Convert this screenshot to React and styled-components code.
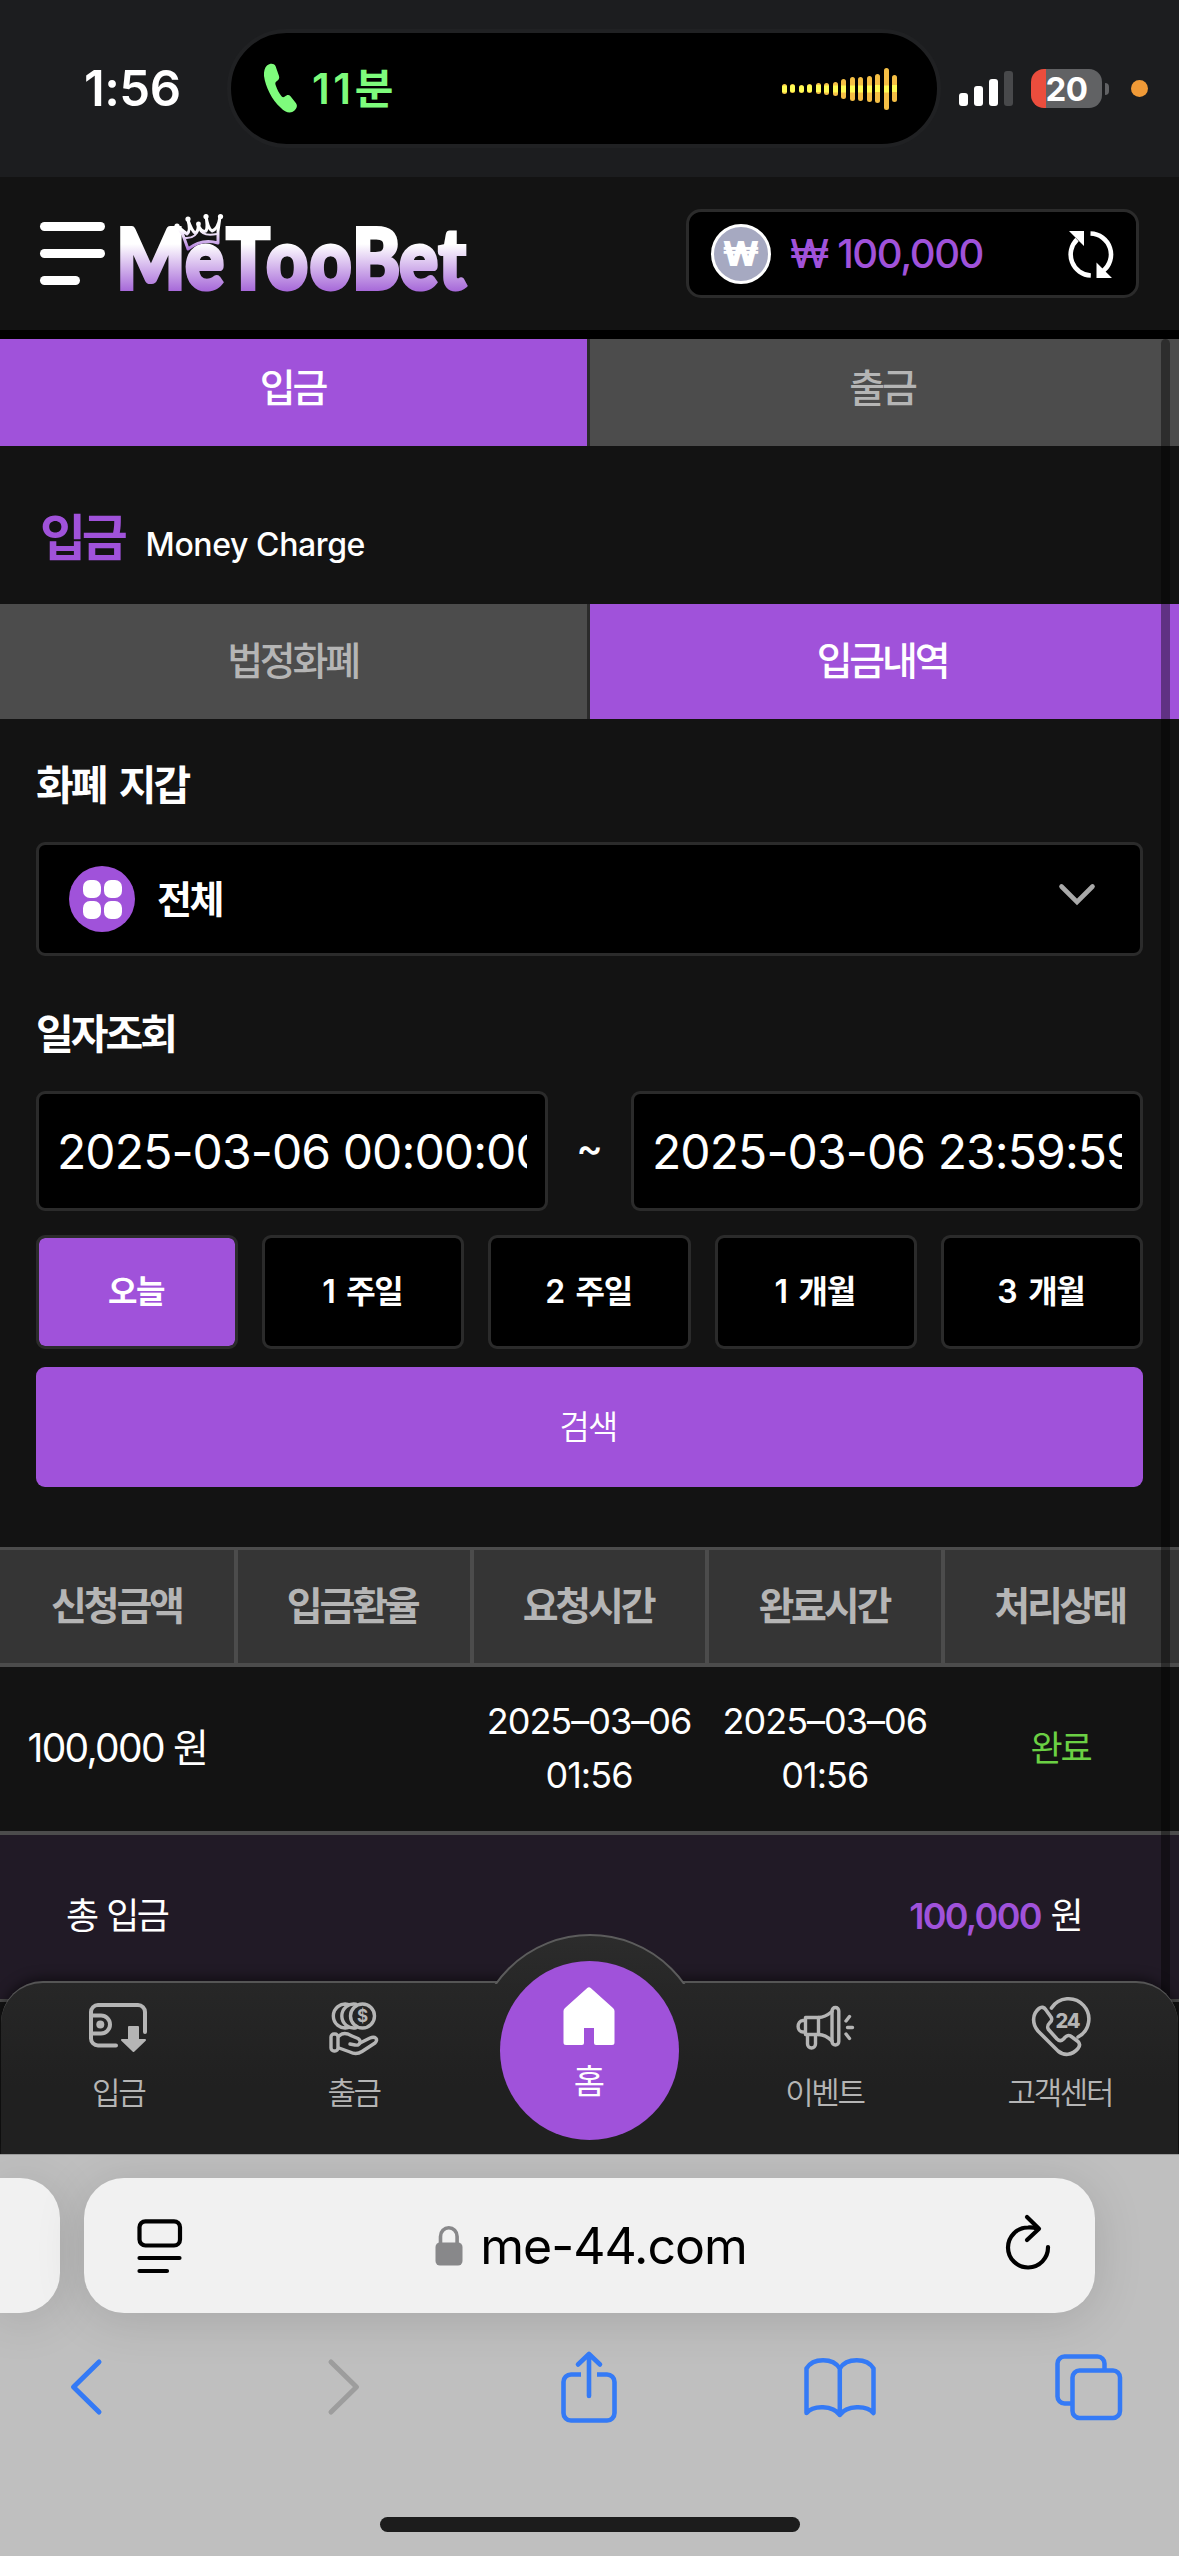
import React from 'react'
import styled, { createGlobalStyle } from 'styled-components'


const theme = {
    primary: '#a052da',
    page: '#131313',
    line: '#2b2b2b',
    grey: '#4c4c4c',
    muted: '#b5b5b5',
    blue: '#347af6',
};

const GlobalStyle = createGlobalStyle`
    *, *::before, *::after {
        box-sizing: border-box;
    }

    body {
        margin: 0;
        background-color: #000;
        font-family: 'Inter', 'Noto Sans CJK KR', sans-serif;
        color: #fff;
    }

    button, input {
        font-family: inherit;
        color: inherit;
        margin: 0;
        padding: 0;
        border: 0;
        outline: 0;
    }

    svg {
        display: block;
        flex-shrink: 0;
        overflow: visible;
    }
`;

const Screen = styled.div`
    width: 1179px;
    height: 2556px;
    display: flex;
    flex-direction: column;
    overflow: hidden;
    background-color: ${theme.page};
`;

/* ---------- phone status bar ---------- */

const StatusBar = styled.div`
    height: 177px;
    display: flex;
    align-items: center;
    background-color: #1c1d1f;
    flex-shrink: 0;
`;

const Clock = styled.span`
    width: 227px;
    padding-left: 84px;
    font-size: 49px;
    font-weight: 600;
    letter-spacing: -0.5px;
    line-height: 60px;
`;

const Island = styled.div`
    width: 714px;
    height: 119px;
    border: 4px solid #202123;
    border-radius: 60px;
    background-color: #000;
    display: flex;
    align-items: center;
    padding: 0 40px 0 33px;
`;

const CallTime = styled.span`
    margin-left: 15px;
    flex: 1;
    font-size: 42px;
    font-weight: 600;
    letter-spacing: 3.6px;
    line-height: 50px;
    color: #7efc7c;
`;

const Wave = styled.div`
    display: flex;
    align-items: center;
    gap: 3.5px;
`;

const WaveBar = styled.span`
    width: 5px;
    height: ${(props) => props.$height}px;
    border-radius: 3px;
    background: linear-gradient(#f5bf45 calc(50% - 4px), #fffb54 calc(50% - 3px), #fffb54 calc(50% + 3px), #f5bf45 calc(50% + 4px));
`;

const Signal = styled.div`
    display: flex;
    align-items: flex-end;
    gap: 6px;
    margin-left: 18px;
`;

const SignalBar = styled.span`
    width: 9px;
    height: ${(props) => props.$height}px;
    border-radius: 3px;
    background-color: ${(props) => (props.$off ? '#48494b' : '#fff')};
`;

const Battery = styled.div`
    width: 71px;
    height: 39px;
    margin-left: 18px;
    border-radius: 13px;
    display: flex;
    align-items: center;
    justify-content: center;
    background: linear-gradient(90deg, #eb4d3d 15px, #616264 15px);
    font-size: 33px;
    font-weight: 700;
    letter-spacing: -0.5px;
`;

const BatteryNub = styled.span`
    width: 4px;
    height: 12px;
    margin-left: 3px;
    border-radius: 0 4px 4px 0;
    background-color: #616264;
`;

const MicDot = styled.span`
    width: 17px;
    height: 17px;
    margin-left: 22px;
    border-radius: 50%;
    background-color: #f09a37;
`;

/* ---------- site header ---------- */

const Header = styled.header`
    height: 162px;
    flex-shrink: 0;
    display: flex;
    align-items: center;
    padding: 0 40px;
    border-bottom: 9px solid #000;
    background-color: ${theme.page};
`;

const MenuButton = styled.div`
    display: flex;
    flex-direction: column;
    gap: 18px;
    width: 65px;
`;

const MenuLine = styled.span`
    width: ${(props) => (props.$short ? 40 : 65)}px;
    height: 9px;
    border-radius: 5px;
    background-color: #fff;
`;

const LogoWrapper = styled.div`
    margin-left: 13px;
    flex: 1;
`;

const Balance = styled.div`
    width: 453px;
    height: 89px;
    display: flex;
    align-items: center;
    padding: 0 21px 0 22px;
    border: 3px solid ${theme.line};
    border-radius: 15px;
    background-color: #000;
`;

const Coin = styled.div`
    width: 60px;
    height: 60px;
    display: flex;
    align-items: center;
    justify-content: center;
    border: 3px solid #fff;
    border-radius: 50%;
    background-color: #a6a9c1;
    font-size: 34px;
    font-weight: 900;
`;

const BalanceText = styled.span`
    flex: 1;
    margin-left: 19px;
    padding-bottom: 1px;
    font-size: 40px;
    font-weight: 500;
    letter-spacing: -1.4px;
    color: ${theme.primary};
`;

/* ---------- page ---------- */

const Content = styled.main`
    height: 1815px;
    position: relative;
    overflow: hidden;
    flex-shrink: 0;
`;

const Tabs = styled.div`
    height: ${(props) => props.$height}px;
    padding-bottom: ${(props) => props.$lift}px;
    display: grid;
    grid-template-columns: 590px 589px;
    background: linear-gradient(90deg, ${(props) => (props.$active === 0 ? theme.primary : theme.grey)} 587px, ${theme.line} 587px, ${theme.line} 590px, ${(props) => (props.$active === 1 ? theme.primary : theme.grey)} 590px);
`;

const Tab = styled.div`
    display: flex;
    align-items: center;
    justify-content: center;
    padding-right: 5px;
    font-size: 39px;
    font-weight: 500;
    letter-spacing: -3.2px;
    line-height: 40px;
    color: ${(props) => (props.$on ? '#fff' : theme.muted)};
`;

const TitleRow = styled.div`
    height: 158px;
    display: flex;
    align-items: baseline;
    padding: 57px 0 0 40px;
`;

const Title = styled.h1`
    margin: 0;
    font-size: 50px;
    font-weight: 700;
    letter-spacing: -4.2px;
    line-height: 70px;
    color: ${theme.primary};
`;

const SubTitle = styled.span`
    margin-left: 22px;
    font-size: 32px;
    font-weight: 500;
    letter-spacing: -0.4px;
`;

const SearchForm = styled.div`
    display: flex;
    flex-direction: column;
    padding: 0 36px;
`;

const Label = styled.label`
    height: ${(props) => props.$height}px;
    padding-top: ${(props) => props.$top}px;
    font-size: 41px;
    font-weight: 600;
    letter-spacing: -3px;
    word-spacing: 6px;
    line-height: 50px;
`;

const Select = styled.div`
    height: 114px;
    display: flex;
    align-items: center;
    padding: 0 45px 0 30px;
    border: 3px solid ${theme.line};
    border-radius: 9px;
    background-color: #000;
`;

const SelectIcon = styled.div`
    width: 66px;
    height: 66px;
    display: grid;
    grid-template-columns: 18px 18px;
    grid-auto-rows: 18px;
    gap: 3px;
    place-content: center;
    border-radius: 50%;
    background-color: ${theme.primary};
`;

const SelectDot = styled.span`
    border-radius: 7px;
    background-color: #fff;
`;

const SelectText = styled.span`
    flex: 1;
    margin-left: 22px;
    font-size: 38px;
    font-weight: 600;
    letter-spacing: -2.4px;
    line-height: 44px;
`;

const DateRow = styled.div`
    display: flex;
    align-items: center;
    justify-content: space-between;
`;

const DateInput = styled.input`
    width: 512px;
    height: 120px;
    padding: 0 18px;
    border: 3px solid ${theme.line};
    border-radius: 9px;
    background-color: #000;
    font-size: 48px;
    letter-spacing: -0.9px;
`;

const Tilde = styled.span`
    padding-bottom: 7px;
    font-size: 40px;
    font-weight: 500;
`;

const PeriodRow = styled.div`
    display: grid;
    grid-template-columns: repeat(5, 1fr);
    gap: 24px;
    margin-top: 24px;
`;

const PeriodButton = styled.button`
    height: 114px;
    padding-right: 2px;
    border: 3px solid ${theme.line};
    border-radius: 9px;
    background-color: ${(props) => (props.$on ? theme.primary : '#000')};
    background-clip: padding-box;
    font-size: 32px;
    font-weight: 600;
    letter-spacing: -1.3px;
    word-spacing: 5px;
    line-height: 40px;
`;

const SearchButton = styled.button`
    height: 120px;
    margin-top: 18px;
    padding-right: 3px;
    border-radius: 9px;
    background-color: ${theme.primary};
    font-size: 33px;
    font-weight: 350;
    letter-spacing: -1.8px;
    line-height: 40px;
`;

const TableHead = styled.div`
    height: 120px;
    display: grid;
    grid-template-columns: repeat(5, 1fr);
    margin-top: 60px;
    border-top: 3px solid ${theme.grey};
    border-bottom: 4px solid ${theme.grey};
    background-color: #353535;
`;

const HeadCell = styled.div`
    display: flex;
    align-items: center;
    justify-content: center;
    padding: 0 3px 1px 0;
    font-size: 39px;
    font-weight: 600;
    letter-spacing: -3.2px;
    line-height: 40px;
    color: ${theme.muted};

    & + & {
        box-shadow: -2px 0 0 ${theme.grey}, inset 2px 0 0 ${theme.grey};
    }
`;

const TableRow = styled.div`
    height: 168px;
    display: grid;
    grid-template-columns: repeat(5, 1fr);
    border-bottom: 4px solid ${theme.grey};
`;

const Cell = styled.div`
    display: flex;
    align-items: center;
    justify-content: center;
    padding: 0 1px 2px 0;
    text-align: center;
    white-space: pre-line;
    font-size: ${(props) => props.$size || 36}px;
    letter-spacing: ${(props) => props.$spacing || -1}px;
    line-height: 54px;
    color: ${(props) => props.$color || '#fff'};
`;

const TotalRow = styled.div`
    height: 167px;
    display: flex;
    justify-content: space-between;
    padding: 54px 98px 0 66px;
    border-bottom: 3px solid ${theme.grey};
    background-color: #211a26;
    font-size: 36px;
    letter-spacing: -2.5px;
    word-spacing: 2px;
    line-height: 54px;
`;

const TotalAmount = styled.b`
    font-weight: 600;
    letter-spacing: -1.7px;
    color: ${theme.primary};
`;

const ScrollBar = styled.span`
    position: absolute;
    top: 0;
    right: 9px;
    width: 9px;
    bottom: 60px;
    border-radius: 5px;
    background-color: rgba(0, 0, 0, 0.4);
`;

/* ---------- bottom menu, floats over the page ---------- */

const BottomMenu = styled.nav`
    position: absolute;
    left: 1px;
    right: 1px;
    bottom: 0;
    height: 173px;
    display: grid;
    grid-template-columns: repeat(5, 1fr);
    border-top: 2px solid #555;
    border-radius: 42px 42px 0 0;
    background: linear-gradient(#272727, #202020 60%);
    box-shadow: 0 -3px 12px rgba(0, 0, 0, 0.5);

    &::before {
        content: '';
        position: absolute;
        left: 50%;
        top: -49px;
        width: 232px;
        height: 232px;
        margin-left: -116px;
        border: 2px solid #5c5c5c;
        border-radius: 50%;
        background: linear-gradient(#2c2c2c, #272727 22%);
        clip-path: inset(0 0 182px 0);
    }
`;

const MenuItem = styled.div`
    display: flex;
    flex-direction: column;
    align-items: center;
    color: ${theme.muted};
`;

const MenuIcon = styled.div`
    height: 90px;
    display: flex;
    align-items: center;
`;

const MenuText = styled.span`
    padding-right: 1px;
    font-size: 31px;
    font-weight: 350;
    letter-spacing: -2.4px;
    line-height: 39px;
`;

const HomeButton = styled.div`
    position: relative;
    width: 179px;
    height: 179px;
    margin-top: -22px;
    display: flex;
    flex-direction: column;
    align-items: center;
    gap: 12px;
    padding-top: 26px;
    border-radius: 50%;
    background-color: ${theme.primary};
    color: #fff;
    font-size: 34px;
    line-height: 50px;
`;

/* ---------- browser bar ---------- */

const Browser = styled.footer`
    height: 402px;
    flex-shrink: 0;
    border-top: 1px solid #9a9a9a;
    background-color: #bfbfbf;
    overflow: hidden;
`;

const AddressRow = styled.div`
    display: flex;
    gap: 24px;
    padding-top: 23px;
`;

const PrevTab = styled.div`
    width: 60px;
    height: 135px;
    border-radius: 0 40px 40px 0;
    background-color: #f1f1f1;
    box-shadow: 0 6px 50px rgba(0, 0, 0, 0.13);
`;

const AddressBar = styled.div`
    width: 1011px;
    height: 135px;
    display: flex;
    align-items: center;
    justify-content: space-between;
    padding: 0 43px 0 52px;
    border-radius: 40px;
    background-color: #f1f1f1;
    box-shadow: 0 6px 50px rgba(0, 0, 0, 0.13);
`;

const Address = styled.div`
    display: flex;
    align-items: center;
    gap: 17px;
    padding-right: 6px;
    font-size: 50px;
    letter-spacing: -1px;
    color: #000;
`;

const Toolbar = styled.div`
    height: 148px;
    display: flex;
    align-items: center;
    justify-content: space-between;
    padding: 0 52px 0 48px;
    color: ${theme.blue};
`;

const Tool = styled.div`
    width: 76px;
    display: flex;
    justify-content: center;
    padding-left: ${(props) => props.$shift || 0}px;
    color: ${(props) => (props.$off ? '#9d9d9d' : 'inherit')};
`;

const HomeIndicator = styled.div`
    width: 420px;
    height: 15px;
    margin: 56px auto 0;
    border-radius: 8px;
    background-color: #1c1c1c;
`;

/* ---------- drawings ---------- */

function Logo() {
    return (
        <svg width="350" height="84" viewBox="118 212 350 84">
            <defs>
                <linearGradient id="logo" gradientUnits="userSpaceOnUse" x1="0" y1="244" x2="0" y2="292">
                    <stop offset="0" stopColor="#fff" />
                    <stop offset="1" stopColor="#a566d8" />
                </linearGradient>
                <linearGradient id="crown" gradientUnits="userSpaceOnUse" x1="0" y1="230" x2="0" y2="252">
                    <stop offset="0" stopColor="#fff" />
                    <stop offset="1" stopColor="#a566d8" />
                </linearGradient>
            </defs>
            <text
                transform="scale(0.87 1)"
                x="134 213 260 306 356 405 459 504"
                y="289"
                fontFamily="Lato"
                fontWeight="900"
                fontSize="83"
                fill="url(#logo)"
                stroke="url(#logo)"
                strokeWidth="4"
            >
                MeTooBet
            </text>
            <g fill="none" stroke="url(#crown)" strokeWidth="3" strokeLinejoin="round">
                <path d="M188 249L183 235L177 226L187 234Q191 231 188 220Q192 231 195 233Q199 231 198 224Q201 233 206 231Q208 228 206 216Q208 229 212 231Q218 229 220 217L218 231L218 243Q202 238 188 249Z" fill={theme.page} />
                <path d="M185 238Q196 239 199 228Q202 237 217 234" strokeWidth="2" />
            </g>
            <g fill="#fff">
                <circle cx="177" cy="226" r="2.6" />
                <circle cx="188" cy="219" r="2.6" />
                <circle cx="198.5" cy="224" r="2.4" />
                <circle cx="206" cy="216.5" r="2.6" />
                <circle cx="220.5" cy="216.5" r="2.6" />
            </g>
        </svg>
    )
}

function PhoneIcon() {
    return (
        <svg width="33" height="51" viewBox="0 0 33 51" fill="#7efc7c">
            <path d="M3 2.500C6 0 10 0 11.500 3L15 13c.8 2.500-.5 4-3 5.800-.9.800-.8 2-.3 3.400 1.400 4.100 3.300 8 5.800 11 1 1.200 2 1.400 3 .6 2.500-1.700 4-2.500 6-.5l5.500 7c1.800 2.500.8 5-1.500 7.300-3.500 3.400-9 2.400-14-3C8 37 1.500 24 0 13 -.3 8 .8 4.500 3 2.500Z" />
        </svg>
    )
}

function RefreshIcon() {
    return (
        <svg width="50" height="50" viewBox="0 0 50 50" fill="none">
            <path d="M12 10.500A21 21 0 0 0 25.800 46.500M25.500 4.500A21 21 0 0 1 38 42" stroke="#fff" strokeWidth="4.6" />
            <path d="M4 2H19V17ZM31.500 33.500V49H47Z" fill="#fff" />
        </svg>
    )
}

function DepositIcon() {
    return (
        <svg width="61" height="52" viewBox="0 0 61 52" fill="none" stroke="currentColor" strokeWidth="4" strokeLinecap="round">
            <path d="M28 43.500H10a7 7 0 0 1-7-7V10a7 7 0 0 1 7-7H50a7 7 0 0 1 7 7V30" />
            <path d="M3 13.500H13a9 9 0 0 1 0 18H3" />
            <circle cx="12.3" cy="22.5" r="4" fill="currentColor" stroke="none" />
            <path d="M41 25H50V38H57L45.500 49L34 38H41Z" fill="currentColor" strokeWidth="2" strokeLinejoin="round" />
        </svg>
    )
}

function WithdrawIcon() {
    return (
        <svg width="53" height="54" viewBox="0 0 53 54" fill="none" stroke="currentColor" strokeWidth="3.4" strokeLinecap="round" strokeLinejoin="round">
            <circle cx="34.5" cy="15" r="12" />
            <path d="M28 3.200A12 12 0 1 0 28 26.800M20 3.300A12 12 0 1 0 20 26.700" />
            <text x="34.5" y="21" fontSize="17" fontWeight="700" textAnchor="middle" fill="currentColor" stroke="none">$</text>
            <rect x="3" y="33" width="7" height="17" rx="3" />
            <path d="M11 35C15 31 19 32 24 35L30 37.500C34 40 32 45 27 44L22 43" />
            <path d="M32 42L42 37C47 35 51 38 47 42L34 50.500C30 53 26 53 22 51L11 47" />
        </svg>
    )
}

function HomeIcon() {
    return (
        <svg width="52" height="58" viewBox="0 0 52 58" fill="#fff">
            <path d="M24 1.200Q26-.800 28 1.200L50 21Q51.500 22.500 51.500 24V55.500Q51.500 58 49 58H33Q31 58 31 56V41H21V56Q21 58 19 58H3Q.5 58 .5 55.500V24Q.5 22.500 2 21Z" />
        </svg>
    )
}

function EventIcon() {
    return (
        <svg width="60" height="48" viewBox="0 0 60 48" fill="none" stroke="currentColor" strokeWidth="3.4" strokeLinecap="round" strokeLinejoin="round">
            <rect x="37" y="3.5" width="6.8" height="37.5" rx="3.4" />
            <path d="M10.500 13.500H23.500V30.500H10.500ZM10.500 16.500H8C1.500 17 1.500 28 8 28H10.500" />
            <path d="M23.500 13.500C29 13.500 34 10 37 7.500M23.500 30.500C29 30.500 34 34 37 37" />
            <path d="M12.500 31V40a4 4 0 0 0 8 0V31" />
            <path d="M51 17L54.500 12.500M52.500 23.500H57.500M51 30L54.500 34.500" />
        </svg>
    )
}

function CenterIcon() {
    return (
        <svg width="60" height="58" viewBox="0 0 60 58" fill="none" stroke="currentColor" strokeWidth="3.6" strokeLinecap="round" strokeLinejoin="round">
            <path d="M21.500 9A20.300 20.300 0 1 1 48 38" />
            <path d="M9 9.500C11.500 7.500 14 8 16 11L21 18C22.500 20.500 22 21.500 20 23.500C17 26.500 17 28 18.500 30.500L27 40C29 42 31 42.500 33.500 40C37 36 39 35.500 42 38L48 42.500C50.500 45 50 47 48 49.500C42 56.500 34 57 28 52L8 32C2 25 2 15 9 9.500Z" />
            <text x="37.5" y="28.5" fontSize="20" fontWeight="800" letterSpacing="-1" textAnchor="middle" fill="currentColor" stroke="none">24</text>
        </svg>
    )
}

function ReaderIcon() {
    return (
        <svg width="48" height="56" viewBox="0 0 48 56" fill="none" stroke="#000" strokeWidth="4.2" strokeLinecap="round">
            <rect x="3.5" y="3.3" width="40.5" height="24.2" rx="6" />
            <path d="M3.500 40H43.500M3.500 53H31" />
        </svg>
    )
}

function LockIcon() {
    return (
        <svg width="28" height="40" viewBox="0 0 28 40" fill="none">
            <path d="M5.500 18V10.500a8.300 8.700 0 0 1 16.600 0V18" stroke="#88888a" strokeWidth="3.6" />
            <rect x=".5" y="16.5" width="27" height="23" rx="4.5" fill="#88888a" />
        </svg>
    )
}

function ReloadIcon() {
    return (
        <svg width="48" height="65" viewBox="0 0 48 65" fill="none" stroke="#000" strokeWidth="4.2" strokeLinecap="round" strokeLinejoin="round">
            <path d="M34 15.700C30 14.500 27 14.300 24 14.500A20 20 0 1 0 44 34" />
            <path d="M23 4L35 15.700L23 27" />
        </svg>
    )
}

function ShareIcon() {
    return (
        <svg width="60" height="76" viewBox="0 0 60 76" fill="none" stroke="currentColor" strokeWidth="4.6" strokeLinecap="round" strokeLinejoin="round">
            <path strokeLinecap="butt" d="M22 25.500H12a7.500 7.500 0 0 0-7.500 7.500V64a7.500 7.500 0 0 0 7.500 7.500H48a7.500 7.500 0 0 0 7.500-7.500V33a7.500 7.500 0 0 0-7.500-7.500H38" />
            <path d="M30 47V5M19 15.500L30 5L41 15.500" />
        </svg>
    )
}

function BookIcon() {
    return (
        <svg width="76" height="62" viewBox="0 0 76 62" fill="none" stroke="currentColor" strokeWidth="4.5" strokeLinecap="round" strokeLinejoin="round">
            <path d="M37.800 12.500C31 1.500 11 1.500 4.500 12.500V57C11 49 31 49 37.800 59C44.500 49 65 49 71.500 57V12.500C65 1.500 44.500 1.500 37.800 12.500ZV59" />
        </svg>
    )
}

function PagesIcon() {
    return (
        <svg width="72" height="70" viewBox="0 0 72 70" fill="none" stroke="currentColor" strokeWidth="4.5">
            <path d="M51.500 17V11.500a7 7 0 0 0-7-7H11.500a7 7 0 0 0-7 7V44.500a7 7 0 0 0 7 7H18" />
            <rect x="19.5" y="18.5" width="47.5" height="47.5" rx="7" />
        </svg>
    )
}

const waveHeights = [10, 9, 8, 9, 11, 12, 14, 20, 24, 24, 26, 29, 42, 27];

const periods = ['오늘', '1 주일', '2 주일', '1 개월', '3 개월'];

const columns = ['신청금액', '입금환율', '요청시간', '완료시간', '처리상태'];

export default function App() {

    return (
        <Screen>
            <GlobalStyle />
            <StatusBar>
                <Clock>1:56</Clock>
                <Island>
                    <PhoneIcon />
                    <CallTime>11분</CallTime>
                    <Wave>
                        {waveHeights.map((height, index) => <WaveBar key={index} $height={height} />)}
                    </Wave>
                </Island>
                <Signal>
                    <SignalBar $height={13} />
                    <SignalBar $height={20} />
                    <SignalBar $height={27} />
                    <SignalBar $height={35} $off />
                </Signal>
                <Battery>20</Battery>
                <BatteryNub />
                <MicDot />
            </StatusBar>

            <Header>
                <MenuButton>
                    <MenuLine />
                    <MenuLine />
                    <MenuLine $short />
                </MenuButton>
                <LogoWrapper>
                    <Logo />
                </LogoWrapper>
                <Balance>
                    <Coin>₩</Coin>
                    <BalanceText>₩ 100,000</BalanceText>
                    <RefreshIcon />
                </Balance>
            </Header>

            <Content>
                <Tabs $height={107} $lift={10} $active={0}>
                    <Tab $on>입금</Tab>
                    <Tab>출금</Tab>
                </Tabs>
                <TitleRow>
                    <Title>입금</Title>
                    <SubTitle>Money Charge</SubTitle>
                </TitleRow>
                <Tabs $height={115} $lift={2} $active={1}>
                    <Tab>법정화폐</Tab>
                    <Tab $on>입금내역</Tab>
                </Tabs>

                <SearchForm>
                    <Label $height={123} $top={41}>화폐 지갑</Label>
                    <Select>
                        <SelectIcon>
                            <SelectDot />
                            <SelectDot />
                            <SelectDot />
                            <SelectDot />
                        </SelectIcon>
                        <SelectText>전체</SelectText>
                        <svg width="36" height="32" viewBox="0 0 36 32" fill="none" stroke="#a9a9a9" strokeWidth="4.6" strokeLinecap="round">
                            <path d="M2.500 3.500L18 19L33.500 3.500" />
                        </svg>
                    </Select>
                    <Label $height={135} $top={53}>일자조회</Label>
                    <DateRow>
                        <DateInput readOnly value="2025-03-06 00:00:00" />
                        <Tilde>~</Tilde>
                        <DateInput readOnly value="2025-03-06 23:59:59" />
                    </DateRow>
                    <PeriodRow>
                        {periods.map((period, index) => (
                            <PeriodButton key={period} $on={index === 0}>{period}</PeriodButton>
                        ))}
                    </PeriodRow>
                    <SearchButton>검색</SearchButton>
                </SearchForm>

                <TableHead>
                    {columns.map((column) => <HeadCell key={column}>{column}</HeadCell>)}
                </TableHead>
                <TableRow>
                    <Cell $size={39} $spacing={-1.7}>100,000 원</Cell>
                    <Cell />
                    <Cell>{'2025–03–06\n01:56'}</Cell>
                    <Cell>{'2025–03–06\n01:56'}</Cell>
                    <Cell $size={35} $spacing={-2} $color="#6bd044">완료</Cell>
                </TableRow>
                <TotalRow>
                    <span>총 입금</span>
                    <span><TotalAmount>100,000</TotalAmount> 원</span>
                </TotalRow>

                <ScrollBar />

                <BottomMenu>
                    <MenuItem>
                        <MenuIcon><DepositIcon /></MenuIcon>
                        <MenuText>입금</MenuText>
                    </MenuItem>
                    <MenuItem>
                        <MenuIcon><WithdrawIcon /></MenuIcon>
                        <MenuText>출금</MenuText>
                    </MenuItem>
                    <MenuItem>
                        <HomeButton>
                            <HomeIcon />
                            홈
                        </HomeButton>
                    </MenuItem>
                    <MenuItem>
                        <MenuIcon><EventIcon /></MenuIcon>
                        <MenuText>이벤트</MenuText>
                    </MenuItem>
                    <MenuItem>
                        <MenuIcon><CenterIcon /></MenuIcon>
                        <MenuText>고객센터</MenuText>
                    </MenuItem>
                </BottomMenu>
            </Content>

            <Browser>
                <AddressRow>
                    <PrevTab />
                    <AddressBar>
                        <ReaderIcon />
                        <Address>
                            <LockIcon />
                            me-44.com
                        </Address>
                        <ReloadIcon />
                    </AddressBar>
                </AddressRow>
                <Toolbar>
                    <Tool>
                        <svg width="32" height="56" viewBox="0 0 32 56" fill="none" stroke="currentColor" strokeWidth="5" strokeLinecap="round" strokeLinejoin="round">
                            <path d="M29 3L3.500 28L29 53" />
                        </svg>
                    </Tool>
                    <Tool $off $shift={5}>
                        <svg width="32" height="56" viewBox="0 0 32 56" fill="none" stroke="currentColor" strokeWidth="5" strokeLinecap="round" strokeLinejoin="round">
                            <path d="M8 3L33.500 28L8 53" />
                        </svg>
                    </Tool>
                    <Tool $shift={3}><ShareIcon /></Tool>
                    <Tool $shift={4}><BookIcon /></Tool>
                    <Tool><PagesIcon /></Tool>
                </Toolbar>
                <HomeIndicator />
            </Browser>
        </Screen>
    )
}
